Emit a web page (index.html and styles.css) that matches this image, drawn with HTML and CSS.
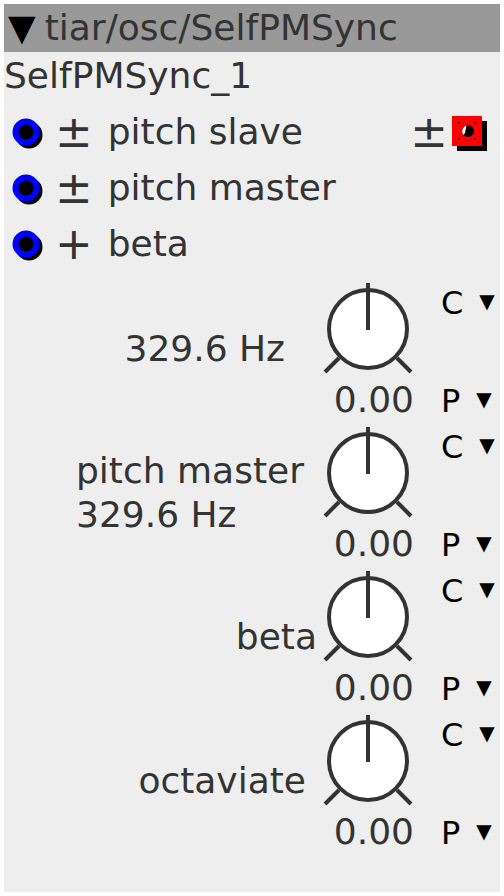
FILE: index.html
```html
<!DOCTYPE html>
<html lang="en">
<head>
    <meta charset="UTF-8">
    <meta name="viewport" content="width=device-width, initial-scale=1.0">
    <title>tiar/osc/SelfPMSync</title>
    <link rel="stylesheet" href="styles.css">
</head>
<body>
    <div class="object">
        <div class="title"><span class="collapse">▼</span>tiar/osc/SelfPMSync</div>
        <div class="instance">SelfPMSync_1</div>

        <!-- inlets -->
        <div class="inlets">
            <div class="port-row">
                <svg class="inlet" width="34" height="34" viewBox="0 0 34 34">
                    <circle cx="20" cy="20" r="13.5" fill="#000"/>
                    <circle cx="17" cy="17" r="10.5" fill="none" stroke="#0000ff" stroke-width="6"/>
                </svg>
                <span class="sign">±</span>
                <span class="port-name">pitch slave</span>
                <span class="sign sign-out">±</span>
                <svg class="outlet" width="38" height="38" viewBox="0 0 38 38">
                    <rect x="6" y="6" width="30" height="30" fill="#000"/>
                    <rect x="1" y="1" width="30" height="30" fill="#ff0000"/>
                    <rect x="7" y="7" width="2" height="2" fill="#600"/>
                    <rect x="23" y="7" width="2" height="2" fill="#600"/>
                    <rect x="7" y="23" width="2" height="2" fill="#600"/>
                    <rect x="23" y="23" width="2" height="2" fill="#600"/>
                    <circle cx="17" cy="16" r="6" fill="#000"/>
                    <path d="M12.5 20 A6 6 0 0 1 15.5 10.5 L14 18 Z" fill="#fff"/>
                </svg>
            </div>
            <div class="port-row">
                <svg class="inlet" width="34" height="34" viewBox="0 0 34 34">
                    <circle cx="20" cy="20" r="13.5" fill="#000"/>
                    <circle cx="17" cy="17" r="10.5" fill="none" stroke="#0000ff" stroke-width="6"/>
                </svg>
                <span class="sign">±</span>
                <span class="port-name">pitch master</span>
            </div>
            <div class="port-row">
                <svg class="inlet" width="34" height="34" viewBox="0 0 34 34">
                    <circle cx="20" cy="20" r="13.5" fill="#000"/>
                    <circle cx="17" cy="17" r="10.5" fill="none" stroke="#0000ff" stroke-width="6"/>
                </svg>
                <span class="sign">+</span>
                <span class="port-name">beta</span>
            </div>
        </div>

        <!-- parameters -->
        <div class="params">
            <div class="param">
                <div class="param-label label-1">329.6 Hz</div>
                <div class="knob-col">
                    <svg class="knob" width="92" height="92" viewBox="0 0 92 92">
                        <circle cx="46" cy="47" r="39" fill="#fff" stroke="#333" stroke-width="4"/>
                        <line x1="46" y1="1" x2="46" y2="48" stroke="#333" stroke-width="4"/>
                        <line x1="17" y1="76" x2="3" y2="90" stroke="#333" stroke-width="4"/>
                        <line x1="75" y1="76" x2="89" y2="90" stroke="#333" stroke-width="4"/>
                    </svg>
                    <div class="value">0.00</div>
                </div>
                <div class="modes">
                    <div class="mode">C<span class="tri">▼</span></div>
                    <div class="mode">P<span class="tri">▼</span></div>
                </div>
            </div>

            <div class="param">
                <div class="param-label label-2">pitch master<br>329.6 Hz</div>
                <div class="knob-col">
                    <svg class="knob" width="92" height="92" viewBox="0 0 92 92">
                        <circle cx="46" cy="47" r="39" fill="#fff" stroke="#333" stroke-width="4"/>
                        <line x1="46" y1="1" x2="46" y2="48" stroke="#333" stroke-width="4"/>
                        <line x1="17" y1="76" x2="3" y2="90" stroke="#333" stroke-width="4"/>
                        <line x1="75" y1="76" x2="89" y2="90" stroke="#333" stroke-width="4"/>
                    </svg>
                    <div class="value">0.00</div>
                </div>
                <div class="modes">
                    <div class="mode">C<span class="tri">▼</span></div>
                    <div class="mode">P<span class="tri">▼</span></div>
                </div>
            </div>

            <div class="param">
                <div class="param-label label-3">beta</div>
                <div class="knob-col">
                    <svg class="knob" width="92" height="92" viewBox="0 0 92 92">
                        <circle cx="46" cy="47" r="39" fill="#fff" stroke="#333" stroke-width="4"/>
                        <line x1="46" y1="1" x2="46" y2="48" stroke="#333" stroke-width="4"/>
                        <line x1="17" y1="76" x2="3" y2="90" stroke="#333" stroke-width="4"/>
                        <line x1="75" y1="76" x2="89" y2="90" stroke="#333" stroke-width="4"/>
                    </svg>
                    <div class="value">0.00</div>
                </div>
                <div class="modes">
                    <div class="mode">C<span class="tri">▼</span></div>
                    <div class="mode">P<span class="tri">▼</span></div>
                </div>
            </div>

            <div class="param">
                <div class="param-label label-4">octaviate</div>
                <div class="knob-col">
                    <svg class="knob" width="92" height="92" viewBox="0 0 92 92">
                        <circle cx="46" cy="47" r="39" fill="#fff" stroke="#333" stroke-width="4"/>
                        <line x1="46" y1="1" x2="46" y2="48" stroke="#333" stroke-width="4"/>
                        <line x1="17" y1="76" x2="3" y2="90" stroke="#333" stroke-width="4"/>
                        <line x1="75" y1="76" x2="89" y2="90" stroke="#333" stroke-width="4"/>
                    </svg>
                    <div class="value">0.00</div>
                </div>
                <div class="modes">
                    <div class="mode">C<span class="tri">▼</span></div>
                    <div class="mode">P<span class="tri">▼</span></div>
                </div>
            </div>
        </div>
    </div>
</body>
</html>
```

FILE: styles.css
```css
body {
    margin: 0;
    padding: 0;
    background-color: #fff;
    font-family: "DejaVu Sans", Verdana, sans-serif;
    font-size: 36px;
    color: #333;
}
.object {
    margin: 4px;
    width: 496px;
    height: 888px;
    background-color: #eee;
}
.title {
    height: 48px;
    line-height: 48px;
    background-color: #999;
    padding-left: 4px;
    white-space: nowrap;
}
.collapse {
    color: #000;
    margin-right: 9px;
}
.instance {
    height: 52px;
    line-height: 48px;
}

/* inlets / outlets */
.port-row {
    display: flex;
    align-items: center;
    height: 56px;
    line-height: 56px;
    padding-left: 5px;
}
.inlet {
    flex: none;
}
.sign {
    font-size: 45px;
    margin-left: 12px;
}
.port-name {
    margin-left: 15px;
}
.sign-out {
    margin-left: auto;
}
.outlet {
    flex: none;
    margin-left: 3px;
    margin-right: 11px;
    margin-top: 4px;
}

/* parameters */
.params {
    margin-top: 8px;
}
.param {
    display: flex;
    height: 144px;
}
.param-label {
    flex: 1;
    display: flex;
    align-items: center;
    justify-content: flex-end;
    line-height: 44px;
    padding-bottom: 6px;
    text-align: left;
}
.label-1 { margin-right: 37px; }
.label-2 { margin-right: 18px; }
.label-3 { margin-right: 5px; }
.label-4 { margin-right: 16px; }
.knob-col {
    width: 92px;
    padding-top: 2px;
}
.knob {
    display: block;
}
.value {
    margin-top: 6px;
    line-height: 40px;
    text-align: right;
    white-space: nowrap;
}
.modes {
    width: 59px;
    margin-left: 27px;
    display: flex;
    flex-direction: column;
    justify-content: space-between;
    padding: 3px 0;
    color: #000;
    font-size: 32px;
}
.mode {
    line-height: 40px;
    height: 40px;
    white-space: nowrap;
}
.tri {
    font-size: 20px;
    margin-left: 16px;
    vertical-align: top;
    line-height: 36px;
}
```
